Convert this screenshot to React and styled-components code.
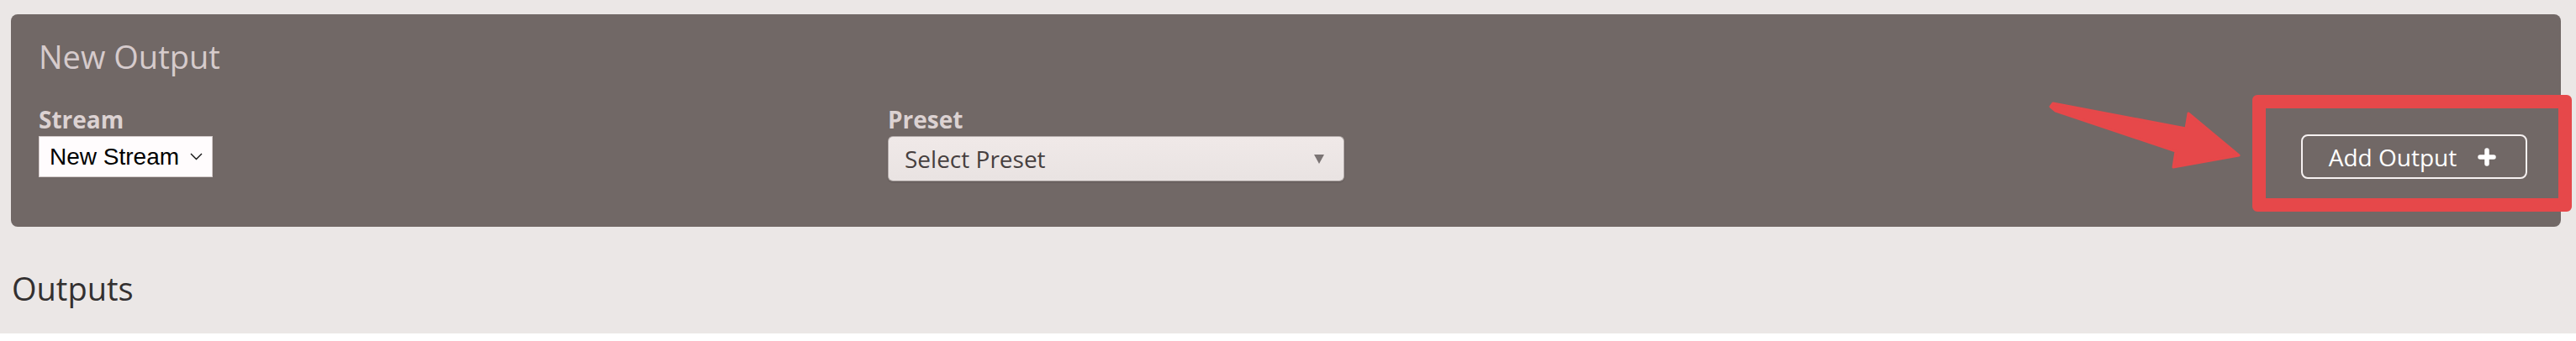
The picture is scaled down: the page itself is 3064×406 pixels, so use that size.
import React from "react";
import styled, { createGlobalStyle } from "styled-components";

const Global = createGlobalStyle`
  html, body {
    margin: 0;
    background: #ffffff;
  }
  body {
    font-family: "Open Sans", "Noto Sans", sans-serif;
  }
`;

const Page = styled.div`
  background: #ebe7e6;
  padding: 17px 18px 30px 13px;
`;

const Panel = styled.section`
  position: relative;
  background: #716866;
  border-radius: 8px;
  padding: 28px 40px 54px 33px;
`;

const PanelTitle = styled.h2`
  margin: 0 0 35px;
  font-size: 38px;
  line-height: 1.2;
  font-weight: 400;
  color: #d6cbcc;
`;

const Row = styled.div`
  display: grid;
  grid-template-columns: 1010px 543px 1fr;
  align-items: start;
`;

const Field = styled.div`
  display: flex;
  flex-direction: column;
  gap: 3px;
`;

const Label = styled.label`
  font-size: 28px;
  line-height: 1.2;
  font-weight: 700;
  color: #dcd2d2;
`;

const NativeSelect = styled.div`
  box-sizing: border-box;
  width: 207px;
  height: 49px;
  display: flex;
  align-items: center;
  justify-content: space-between;
  padding: 0 11px 0 12px;
  background: #fffcfd;
  border: 1px solid #d4cbcb;
  font-family: "Liberation Sans", Arial, sans-serif;
  font-size: 28px;
  color: #000;
`;

const FancySelect = styled.div`
  box-sizing: border-box;
  width: 543px;
  height: 54px;
  display: flex;
  align-items: center;
  justify-content: space-between;
  padding: 0 23px 0 19px;
  background: linear-gradient(#f0e9e8, #e9e3e2);
  border: 1px solid #b3abaa;
  border-bottom-color: #a39b9a;
  border-radius: 6px;
  box-shadow: 0 1px 2px rgba(0, 0, 0, 0.15);
  font-size: 28px;
  color: #463f3f;
`;

const AddButton = styled.button`
  align-self: end;
  justify-self: end;
  margin-bottom: 3px;
  box-sizing: border-box;
  width: 269px;
  height: 53px;
  display: flex;
  align-items: center;
  justify-content: center;
  gap: 25px;
  padding: 0 4px 0 0;
  background: transparent;
  border: 2px solid #f6f1f1;
  border-radius: 8px;
  font-family: "Open Sans", sans-serif;
  font-size: 28px;
  color: #ffffff;
  cursor: pointer;
`;

const Highlight = styled.div`
  position: absolute;
  top: 96px;
  right: -13px;
  width: 380px;
  height: 139px;
  box-sizing: border-box;
  border: 16px solid #e6484a;
  border-radius: 6px;
  pointer-events: none;
`;

const Pointer = styled.svg`
  position: absolute;
  top: 98px;
  right: 376px;
  width: 240px;
  height: 90px;
  pointer-events: none;
`;

const SectionTitle = styled.h2`
  margin: 51px 0 0 1px;
  font-size: 38px;
  line-height: 1.2;
  font-weight: 400;
  color: #333030;
`;

const Chevron = () => (
  <svg width="15" height="9" viewBox="0 0 15 9">
    <polyline points="1,1 7.5,7.5 14,1" fill="none" stroke="#111" strokeWidth="1.4" />
  </svg>
);

const Caret = () => (
  <svg width="12" height="11" viewBox="0 0 12 11">
    <polygon points="0,0 12,0 6,11" fill="#7b7474" />
  </svg>
);

const Plus = () => (
  <svg width="22" height="22" viewBox="0 0 22 22">
    <path d="M11 3v16M3 11h16" stroke="#fff" strokeWidth="5.5" strokeLinecap="round" />
  </svg>
);

export default function App() {
  return (
    <Page>
      <Global />
      <Panel>
        <PanelTitle>New Output</PanelTitle>
        <Row>
          <Field>
            <Label>Stream</Label>
            <NativeSelect>
              <span>New Stream</span>
              <Chevron />
            </NativeSelect>
          </Field>
          <Field>
            <Label>Preset</Label>
            <FancySelect>
              <span>Select Preset</span>
              <Caret />
            </FancySelect>
          </Field>
          <AddButton>
            <span>Add Output</span>
            <Plus />
          </AddButton>
        </Row>
        <Pointer viewBox="0 0 240 90">
          <polygon
            points="9,12 12,8 170,38 173,20 233,70 155,84 158,65 15,17"
            fill="#e6484a"
            stroke="#e6484a"
            strokeWidth="3"
            strokeLinejoin="round"
          />
        </Pointer>
        <Highlight />
      </Panel>
      <SectionTitle>Outputs</SectionTitle>
    </Page>
  );
}
